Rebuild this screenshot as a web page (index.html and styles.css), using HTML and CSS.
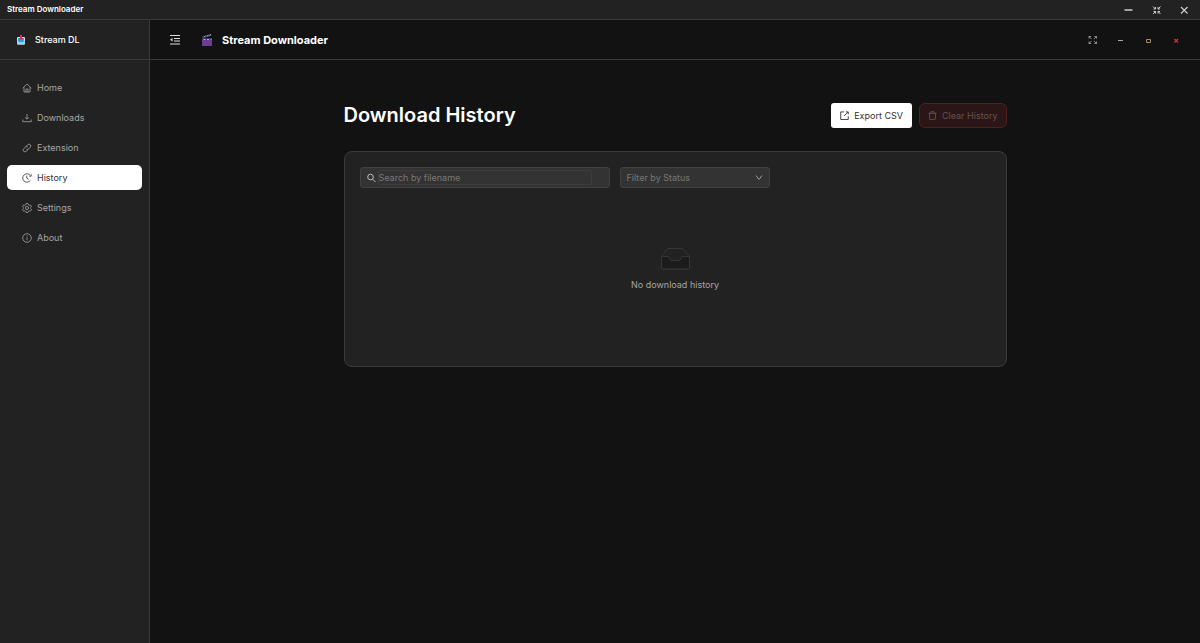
FILE: index.html
```
<!DOCTYPE html>
<html lang="en">
<head>
    <meta charset="UTF-8">
    <meta name="viewport" content="width=device-width, initial-scale=1.0">
    <title>Stream Downloader</title>
    <link rel="stylesheet" href="styles.css">
</head>
<body>
    <div class="titlebar">
        <span class="titlebar-name">Stream Downloader</span>
        <div class="window-buttons">
            <button type="button" aria-label="Minimize window">
                <svg viewBox="0 0 10 10"><path d="M1.5 5h8" stroke-width="1.5"/></svg>
            </button>
            <button type="button" aria-label="Restore window">
                <svg viewBox="0 0 10 10"><path d="M2 1.500L4.500 4M2.500 4h2V2M9.500 1.500L7 4M9 4H7V2M2 9l2.500-2.500M2.500 6.500h2v2M9.500 9L7 6.500M9 6.500H7v2"/></svg>
            </button>
            <button type="button" aria-label="Close window">
                <svg viewBox="0 0 10 10"><path d="M2 2l6.5 6.5M8.5 2L2 8.5" stroke-width="1.2"/></svg>
            </button>
        </div>
    </div>

    <div class="layout">
        <aside class="sidebar">
            <div class="brand">
                <svg class="brand-icon" viewBox="0 0 10 10">
                    <rect x="1" y="2" width="8" height="7.5" rx="1" fill="#d5e5ee"/>
                    <rect x="2" y="3" width="6" height="4.500" fill="#1ea7e8"/>
                    <path d="M1 5.500h1L3 7.500h4L8 5.500h1v3a1 1 0 0 1-1 1H2a1 1 0 0 1-1-1z" fill="#a9cfe2"/>
                    <path d="M4 0h2v3h1.500L5 5.500 2.500 3H4z" fill="#e8295c"/>
                </svg>
                <span>Stream DL</span>
            </div>
            <nav class="menu">
                <a href="#home" class="menu-item">
                    <svg viewBox="0 0 10 10"><path d="M.7 5.200L5 1l4.300 4.200M2 4.300V9h6V4.300M4 9V6h2v3"/></svg>
                    Home
                </a>
                <a href="#downloads" class="menu-item">
                    <svg viewBox="0 0 10 10"><path d="M5 1v5M3.200 4.400L5 6.200l1.800-1.800M.8 6.500V8.700h8.400V6.500"/></svg>
                    Downloads
                </a>
                <a href="#extension" class="menu-item">
                    <svg viewBox="0 0 10 10"><path d="M4 3.400l1.700-1.700a1.800 1.800 0 0 1 2.600 2.600L6.600 6a1.800 1.800 0 0 1-2.400 0M6 6.600L4.300 8.300a1.800 1.800 0 0 1-2.600-2.600L3.400 4a1.800 1.800 0 0 1 2.400 0"/></svg>
                    Extension
                </a>
                <a href="#history" class="menu-item active" aria-current="page">
                    <svg viewBox="0 0 10 10"><path d="M8.300 7.500A4.200 4.200 0 1 1 8.300 2.500M9.200 1.300v1.900H7.300M4.800 2.700v2.500l1.900 1.200"/></svg>
                    History
                </a>
                <a href="#settings" class="menu-item">
                    <svg viewBox="0 0 10 10"><path d="M4 .6h2l.4 1.200.9.500 1.200-.3 1 1.700-.9.900v.9l.9.900-1 1.700-1.200-.3-.9.500L6 9.400H4l-.4-1.100-.9-.5-1.200.3-1-1.700.9-.9v-.9l-.9-.9 1-1.700 1.200.3.900-.5z"/><circle cx="5" cy="5" r="1.600"/></svg>
                    Settings
                </a>
                <a href="#about" class="menu-item">
                    <svg viewBox="0 0 10 10"><circle cx="5" cy="5" r="4.300"/><path d="M5 4.300v3M5 2.500v1"/></svg>
                    About
                </a>
            </nav>
        </aside>

        <div class="main">
            <header class="header">
                <button type="button" class="fold" aria-label="Collapse menu">
                    <svg viewBox="0 0 10 10"><path d="M0 .5h10M4 3.500h6M4 6h6M0 9h10"/><path d="M2.500 3v3.500L0 4.700z" fill="currentColor" stroke="none"/></svg>
                </button>
                <svg class="app-icon" viewBox="0 0 12 12">
                    <path d="M1 2.500L10 0l.5 1.800L1.500 4.300z" fill="#433b68"/>
                    <path d="M3 3l1.500-1M6 2.200l1.500-1M8.500 1.500l1.500-1" stroke="#a9b9e0"/>
                    <path d="M1 4h10v8H1z" fill="#68408f"/>
                    <path d="M1 4h10v2H1z" fill="#39345c"/>
                    <path d="M2.500 5.500h2M6 5.500h2M9.500 5.500h1" stroke="#a9b9e0"/>
                </svg>
                <span class="header-title">Stream Downloader</span>
                <div class="header-buttons">
                    <button type="button" aria-label="Full screen">
                        <svg viewBox="0 0 10 10"><path d="M2 3.500V1.500H4M2 1.500L4.500 4M7.500 1.500h2v2M9.500 1.500L7 4M2 6.500v2h2M2 8.500L4.500 6M7.500 8.500h2v-2M9.500 8.500L7 6" stroke-width=".8"/></svg>
                    </button>
                    <button type="button" aria-label="Minimize">
                        <svg viewBox="0 0 10 10"><path d="M3 5.500h5"/></svg>
                    </button>
                    <button type="button" class="maximize" aria-label="Maximize">
                        <svg viewBox="0 0 10 10"><path d="M3.500 4.500h4v3h-4z"/></svg>
                    </button>
                    <button type="button" class="close" aria-label="Close">
                        <svg viewBox="0 0 10 10"><path d="M3.500 4L7 7.500M7 4L3.500 7.500" stroke-width="1.200"/></svg>
                    </button>
                </div>
            </header>

            <main class="content">
                <div class="page-head">
                    <h1>Download History</h1>
                    <div class="actions">
                        <button type="button" class="btn btn-export">
                            <svg viewBox="0 0 10 10"><path d="M4.500 1H.8v8.400h8.400V6M4.500 5.600L8.800 1.300M6.500 1H9.200v2.700"/></svg>
                            Export CSV
                        </button>
                        <button type="button" class="btn btn-clear" disabled>
                            <svg viewBox="0 0 10 10"><path d="M.6 2.500h8.800M3.200 2.500V.8h3.600v1.700M1.600 2.500l.4 6.800h6l.4-6.800"/></svg>
                            Clear History
                        </button>
                    </div>
                </div>

                <section class="card">
                    <div class="filters">
                        <div class="search">
                            <svg viewBox="0 0 10 10"><circle cx="4.500" cy="4" r="2.800"/><path d="M6.500 6L9.500 9"/></svg>
                            <input type="text" placeholder="Search by filename" aria-label="Search by filename">
                        </div>
                        <div class="status">
                            <select aria-label="Filter by Status">
                                <option>Filter by Status</option>
                                <option>Completed</option>
                                <option>Failed</option>
                            </select>
                            <svg viewBox="0 0 10 10"><path d="M2 2.500l3 4 3-4"/></svg>
                        </div>
                    </div>
                    <div class="empty">
                        <svg class="empty-icon" viewBox="0 0 40 26">
                            <ellipse cx="20" cy="21" rx="19" ry="3" fill="#252525" stroke="none"/>
                            <path d="M6.500 10.500L12.500 2.500h15L34.500 10.500v11a1.500 1.500 0 0 1-1.500 1.500H8A1.500 1.500 0 0 1 6.500 21.500z" fill="#222" stroke="#363636"/>
                            <path d="M6.500 10.500h7c.8 0 1 .7 1 1.500 0 1 .6 2.500 1.500 2.500h8.500c.9 0 1.500-1.500 1.500-2.500 0-.8.2-1.500 1-1.500h7.500v11a1.500 1.500 0 0 1-1.500 1.500H8A1.500 1.500 0 0 1 6.500 21.500z" fill="#1b1b1b" stroke="#363636"/>
                        </svg>
                        <p>No download history</p>
                    </div>
                </section>
            </main>
        </div>
    </div>
</body>
</html>
```
FILE: styles.css
```
* {
    box-sizing: border-box;
}
body {
    margin: 0;
    min-height: 100vh;
    display: flex;
    flex-direction: column;
    background: #121212;
    color: #fff;
    font-family: Inter, "Liberation Sans", sans-serif;
    font-size: 9px;
}
button, input, select {
    font: inherit;
    color: inherit;
}
button {
    display: flex;
    align-items: center;
    justify-content: center;
    padding: 0;
    border: none;
    background: none;
    cursor: pointer;
}
svg {
    flex: none;
    width: 10px;
    height: 10px;
    fill: none;
    stroke: currentColor;
    stroke-width: 1;
}

/* title bar */
.titlebar {
    display: flex;
    align-items: center;
    justify-content: space-between;
    height: 20px;
    padding: 0 2px 0 7px;
    background: #222;
    border-bottom: 1px solid #3a3a3a;
}
.titlebar-name {
    font-size: 8px;
    font-weight: 600;
    line-height: 18px;
    align-self: flex-start;
}
.window-buttons {
    display: flex;
}
.window-buttons button {
    width: 28px;
    height: 19px;
    color: #ccc;
}

.layout {
    display: flex;
    flex: 1;
}

/* sidebar */
.sidebar {
    width: 150px;
    background: #222;
    border-right: 1px solid #3a3a3a;
}
.brand {
    display: flex;
    align-items: center;
    gap: 9px;
    height: 40px;
    padding-left: 16px;
    border-bottom: 1px solid #3a3a3a;
    font-weight: 500;
}
.brand-icon, .app-icon {
    stroke: none;
}
.menu {
    display: flex;
    flex-direction: column;
    gap: 5px;
    padding: 15px 7px;
}
.menu-item {
    display: flex;
    align-items: center;
    gap: 5px;
    height: 25px;
    padding: 0 15px;
    border-radius: 5px;
    color: #a6a6a6;
    text-decoration: none;
}
.menu-item svg {
    stroke-width: .8;
}
.menu-item.active {
    background: #fff;
    color: #333;
}

/* header */
.main {
    flex: 1;
    min-width: 0;
}
.header {
    display: flex;
    align-items: center;
    height: 40px;
    padding: 0 10px 0 20px;
    border-bottom: 1px solid #3a3a3a;
}
.fold {
    margin-right: 21px;
    color: #ddd;
}
.app-icon {
    width: 12px;
    height: 12px;
    margin-right: 9px;
}
.header-title {
    font-size: 11px;
    font-weight: 700;
}
.header-buttons {
    display: flex;
    margin-left: auto;
}
.header-buttons button {
    width: 28px;
    height: 20px;
    color: #aaa;
}
.header-buttons .maximize {
    color: #a08c60;
}
.header-buttons .close {
    color: #e03030;
}

/* page */
.content {
    max-width: 693px;
    margin: 0 auto;
    padding: 43px 15px;
}
.page-head {
    display: flex;
    align-items: center;
    justify-content: space-between;
    margin-bottom: 23px;
}
h1 {
    margin: 0;
    font-size: 20px;
    font-weight: 600;
    line-height: 25px;
}
.actions {
    display: flex;
    gap: 7px;
}
.btn {
    gap: 5px;
    height: 25px;
    border-radius: 3px;
}
.btn svg {
    width: 9px;
    height: 9px;
}
.btn-export {
    padding: 0 9px;
    background: #fff;
    color: #333;
}
.btn-clear {
    padding: 0 8px;
    border: 1px solid #50201f;
    border-radius: 6px;
    background: #2a1616;
    color: #655252;
    cursor: not-allowed;
}
.card {
    min-height: 216px;
    padding: 15px;
    background: #222;
    border: 1px solid #3a3a3a;
    border-radius: 8px;
}
.filters {
    display: flex;
    gap: 10px;
}
.search {
    display: flex;
    align-items: center;
    gap: 2px;
    width: 250px;
    height: 21px;
    padding: 0 17px 0 5px;
    background: #333;
    border: 1px solid #404040;
    border-radius: 3px;
    color: #bbb;
}
.search input {
    flex: 1;
    min-width: 0;
    height: 15px;
    padding: 0;
    background: #333;
    border: 1px solid #3d3d3d;
    border-radius: 2px;
    outline: none;
}
.search input::placeholder {
    color: #777;
}
.status {
    display: grid;
    align-items: center;
    width: 150px;
    height: 21px;
}
.status select, .status svg {
    grid-area: 1 / 1;
}
.status select {
    appearance: none;
    width: 100%;
    height: 21px;
    padding: 0 6px;
    background: #333;
    border: 1px solid #404040;
    border-radius: 3px;
    color: #777;
}
.status svg {
    justify-self: end;
    margin-right: 6px;
    color: #999;
    pointer-events: none;
}
.empty {
    display: flex;
    flex-direction: column;
    align-items: center;
    gap: 6px;
    padding-top: 58px;
    color: #a6a6a6;
}
.empty-icon {
    width: 40px;
    height: 26px;
}
.empty p {
    margin: 0;
    line-height: 14px;
}
```
